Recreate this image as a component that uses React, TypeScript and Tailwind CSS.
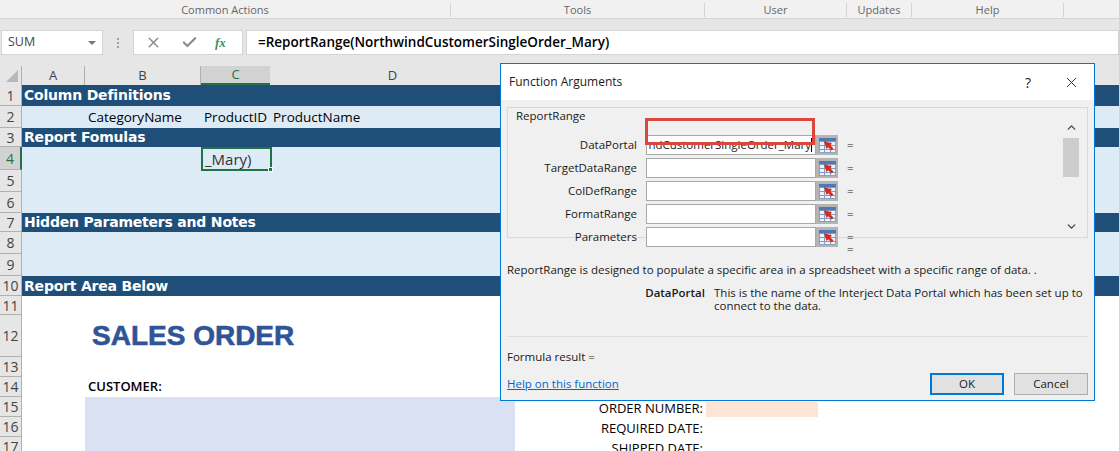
import React from 'react';
import { X, Check, ChevronDown, ChevronUp } from 'lucide-react';

const ribbonGroups = [
  { label: 'Common Actions', width: 'w-[451px]' },
  { label: 'Tools', width: 'w-[254px]' },
  { label: 'User', width: 'w-[142px]' },
  { label: 'Updates', width: 'w-[65px]' },
  { label: 'Help', width: 'w-[152px]' },
];

const argumentRows = ['DataPortal', 'TargetDataRange', 'ColDefRange', 'FormatRange', 'Parameters'];

const RangeIcon = () => (
  <svg width="17" height="15" viewBox="0 0 17 15">
    <rect x="0.5" y="0.5" width="16" height="14" fill="#eef3fa" stroke="#8aa4c8" />
    <path d="M0 3.5H17M0 7.5H17M0 11.5H17M5.5 0V15M11.5 0V15" stroke="#7f9bc4" fill="none" />
    <rect x="0" y="0" width="17" height="3" fill="#4f79b5" />
    <path d="M5 3L13 5.5L11.2 7.2L14.5 10.5L12.5 12.5L9.2 9.2L7.5 11Z" fill="#d8291c" />
  </svg>
);

const HeaderRow = ({ num, h, title, active }: { num: number; h: string; title: string; active?: boolean }) => (
  <SheetRow num={num} h={h} active={active}>
    <div className="flex-1 h-full bg-[#1f4e78] flex items-center pl-[2px] text-white text-[14px] font-bold font-['DejaVu_Sans',sans-serif] tracking-[-0.2px] whitespace-nowrap">
      {title}
    </div>
  </SheetRow>
);

const SheetRow = ({ num, h, active, children }: { num: number; h: string; active?: boolean; children?: React.ReactNode }) => (
  <div className={`flex ${h}`}>
    <div
      className={
        active
          ? 'w-[22px] shrink-0 bg-[#d2d2d2] border-r-2 border-r-[#217346] border-b border-b-[#b0b0b0] flex items-center justify-center text-[14px] text-[#217346]'
          : 'w-[22px] shrink-0 bg-[#e6e6e6] border-r border-r-[#b0b0b0] border-b border-b-[#b0b0b0] flex items-center justify-center text-[14px] text-[#444444]'
      }
    >
      {num}
    </div>
    {children}
  </div>
);

const DialogArgument = ({ label, value }: { label: string; value?: string }) => (
  <div className="flex items-center h-[20px] mb-[3px]">
    <div className="w-[130px] pr-[9px] text-right">{label}</div>
    <div className="w-[170px] h-[20px] bg-white border border-[#a8a8a8] flex items-center justify-end pr-[3px] overflow-hidden whitespace-nowrap">
      {value}
      {value && <span className="inline-block w-px h-[14px] bg-black" />}
    </div>
    <div className="w-[22px] h-[20px] bg-[#b4b4b4] flex items-center justify-center">
      <RangeIcon />
    </div>
    <div className="ml-[9px]">=</div>
  </div>
);

const App = () => {
  return (
    <div className="relative w-[1119px] h-[451px] overflow-hidden bg-white font-['Open_Sans',sans-serif] text-black">
      {/* Ribbon group labels */}
      <div className="flex h-[19px] bg-[#f1f1f1] border-b border-[#d4d4d4] text-[11px] text-[#666666]">
        {ribbonGroups.map((g) => (
          <div key={g.label} className={`${g.width} h-[14px] mt-[3px] flex items-center justify-center border-r border-[#d4d4d4]`}>
            {g.label}
          </div>
        ))}
      </div>

      {/* Formula bar */}
      <div className="flex items-center h-[47px] bg-[#e6e6e6] pl-[1px] pt-[-1px]">
        <div className="w-[102px] h-[25px] bg-white border border-[#d4d4d4] flex items-center justify-between pl-[6px] pr-[6px] text-[12.5px] text-[#444444]">
          SUM
          <span className="w-0 h-0 border-x-[4px] border-x-transparent border-t-[4px] border-t-[#777777]" />
        </div>
        <div className="w-[30px] flex flex-col items-center gap-[2px]">
          <span className="w-[2px] h-[2px] bg-[#a0a0a0]" />
          <span className="w-[2px] h-[2px] bg-[#a0a0a0]" />
          <span className="w-[2px] h-[2px] bg-[#a0a0a0]" />
        </div>
        <div className="w-[110px] h-[25px] bg-white border border-[#d4d4d4] flex items-center pl-[11px] text-[#8a8a8a]">
          <X size={17} strokeWidth={2} />
          <Check size={17} strokeWidth={3} className="ml-[19px]" />
          <span className="ml-[17px] text-[13px] italic font-bold font-['Liberation_Serif',serif] text-[#3f8f5f]">fx</span>
        </div>
        <div className="flex-1 h-[25px] ml-[3px] bg-white border border-[#d4d4d4] flex items-center pl-[11px] text-[13.5px] font-semibold">
          =ReportRange(NorthwindCustomerSingleOrder_Mary)
        </div>
      </div>

      {/* Column headers */}
      <div className="flex h-[19px] bg-[#e6e6e6] text-[13px] text-[#444444]">
        <div className="relative w-[22px] border-r border-[#b0b0b0]">
          <span className="absolute right-[3px] bottom-[3px] w-0 h-0 border-l-[12px] border-l-transparent border-b-[12px] border-b-[#b8b8b8]" />
        </div>
        <div className="w-[63px] flex items-center justify-center border-r border-[#b0b0b0]">A</div>
        <div className="w-[116px] flex items-center justify-center border-r border-[#b0b0b0]">B</div>
        <div className="w-[69px] flex items-center justify-center bg-[#d2d2d2] border-b-2 border-[#217346] text-[#217346]">C</div>
        <div className="w-[245px] flex items-center justify-center">D</div>
        <div className="w-[581px] flex items-center justify-end pr-[7px]">Q</div>
      </div>

      {/* Sheet rows */}
      <HeaderRow num={1} h="h-[21px]" title="Column Definitions" />
      <SheetRow num={2} h="h-[22px]">
        <div className="flex-1 h-full bg-[#ddebf7] flex items-center text-[13.5px] whitespace-nowrap">
          <div className="w-[63px]" />
          <div className="w-[116px] pl-[3px]">CategoryName</div>
          <div className="w-[69px] pl-[3px]">ProductID</div>
          <div className="pl-[3px]">ProductName</div>
        </div>
      </SheetRow>
      <HeaderRow num={3} h="h-[19px]" title="Report Fomulas" />
      <SheetRow num={4} h="h-[23px]" active>
        <div className="flex-1 h-full bg-[#ddebf7]" />
      </SheetRow>
      <SheetRow num={5} h="h-[22px]">
        <div className="flex-1 h-full bg-[#ddebf7]" />
      </SheetRow>
      <SheetRow num={6} h="h-[21px]">
        <div className="flex-1 h-full bg-[#ddebf7]" />
      </SheetRow>
      <HeaderRow num={7} h="h-[19px]" title="Hidden Parameters and Notes" />
      <SheetRow num={8} h="h-[22px]">
        <div className="flex-1 h-full bg-[#ddebf7]" />
      </SheetRow>
      <SheetRow num={9} h="h-[22px]">
        <div className="flex-1 h-full bg-[#ddebf7]" />
      </SheetRow>
      <HeaderRow num={10} h="h-[20px]" title="Report Area Below" />
      <SheetRow num={11} h="h-[19px]" />
      <SheetRow num={12} h="h-[42px]">
        <div className="pl-[70px] flex items-center text-[28px] font-bold font-['Liberation_Sans',sans-serif] text-[#2f5597] [-webkit-text-stroke:0.6px_#2f5597] whitespace-nowrap">
          SALES ORDER
        </div>
      </SheetRow>
      <SheetRow num={13} h="h-[20px]" />
      <SheetRow num={14} h="h-[20px]">
        <div className="pl-[66px] flex items-center text-[13px] font-semibold">CUSTOMER:</div>
      </SheetRow>
      <div className="flex">
        <div className="w-[22px] shrink-0">
          {[15, 16, 17].map((n) => (
            <div key={n} className="h-[20px] bg-[#e6e6e6] border-r border-r-[#b0b0b0] border-b border-b-[#b0b0b0] flex items-center justify-center text-[14px] text-[#444444]">
              {n}
            </div>
          ))}
        </div>
        <div className="w-[63px]" />
        <div className="w-[430px] h-[60px] bg-[#d9e1f2]" />
        <div className="w-[188px] pt-[1px] text-right text-[13px] leading-[20px]">
          <div>ORDER NUMBER:</div>
          <div>REQUIRED DATE:</div>
          <div>SHIPPED DATE:</div>
        </div>
        <div className="ml-[3px] mt-[5px] w-[112px] h-[15px] bg-[#fce4d6]" />
      </div>

      {/* Active cell */}
      <div className="absolute left-[201px] top-[147px] w-[71px] h-[24px] border-2 border-[#217346] pl-[2px] flex items-center text-[15px] text-[#333333]">
        _Mary)
        <span className="absolute right-[-3px] bottom-[-3px] w-[5px] h-[5px] bg-[#217346] border border-white" />
      </div>

      {/* Function Arguments dialog */}
      <div className="absolute left-[500px] top-[63px] w-[595px] h-[338px] bg-[#f0f0f0] border border-[#0078d7] text-[11.5px] text-[#1a1a1a]">
        <div className="flex items-center h-[36px] bg-white pl-[8px] pr-[14px] text-[12px]">
          <div className="flex-1">Function Arguments</div>
          <div className="text-[14px] mr-[32px]">?</div>
          <X size={17} strokeWidth={1.2} />
        </div>

        <div className="relative mx-[6px] mt-[7px] h-[131px] border border-[#d9d9d9] pl-[8px] pt-[13px]">
          <div className="h-[13px] -mt-[12px] mb-[13px] leading-[13px]">ReportRange</div>
          {argumentRows.map((label, i) => (
            <DialogArgument key={label} label={label} value={i === 0 ? 'ndCustomerSingleOrder_Mary' : undefined} />
          ))}
          <div className="absolute left-[137px] top-[10px] w-[170px] h-[27px] border-[3px] border-[#d9473f]" />
          <div className="absolute left-[555px] top-[13px] w-[16px] h-[112px] flex flex-col items-center justify-between text-[#444444]">
            <ChevronUp size={13} strokeWidth={2.5} />
            <div className="absolute top-[17px] w-[16px] h-[39px] bg-[#cdcdcd]" />
            <ChevronDown size={13} strokeWidth={2.5} />
          </div>
        </div>

        <div className="pl-[346px] h-[14px] mt-[4px] leading-[14px]">=</div>
        <div className="pl-[6px] mt-[6px] leading-[16px] whitespace-nowrap">
          ReportRange is designed to populate a specific area in a spreadsheet with a specific range of data. .
        </div>
        <div className="flex mt-[8px] leading-[13px]">
          <div className="w-[204px] pr-0 text-right font-semibold">DataPortal</div>
          <div className="ml-[9px] w-[370px]">This is the name of the Interject Data Portal which has been set up to connect to the data.</div>
        </div>
        <div className="mx-[6px] mt-[24px] border-t border-[#dcdcdc]" />
        <div className="pl-[6px] mt-[12px] leading-[16px]">Formula result =</div>
        <div className="flex items-center justify-between mx-[6px] mt-[8px]">
          <a className="text-[#0066cc] underline">Help on this function</a>
          <div className="flex gap-[10px]">
            <button className="w-[74px] h-[22px] bg-[#e1e1e1] border-2 border-[#0078d7]">OK</button>
            <button className="w-[74px] h-[22px] bg-[#e1e1e1] border border-[#adadad]">Cancel</button>
          </div>
        </div>
      </div>
    </div>
  );
};

export default App;
